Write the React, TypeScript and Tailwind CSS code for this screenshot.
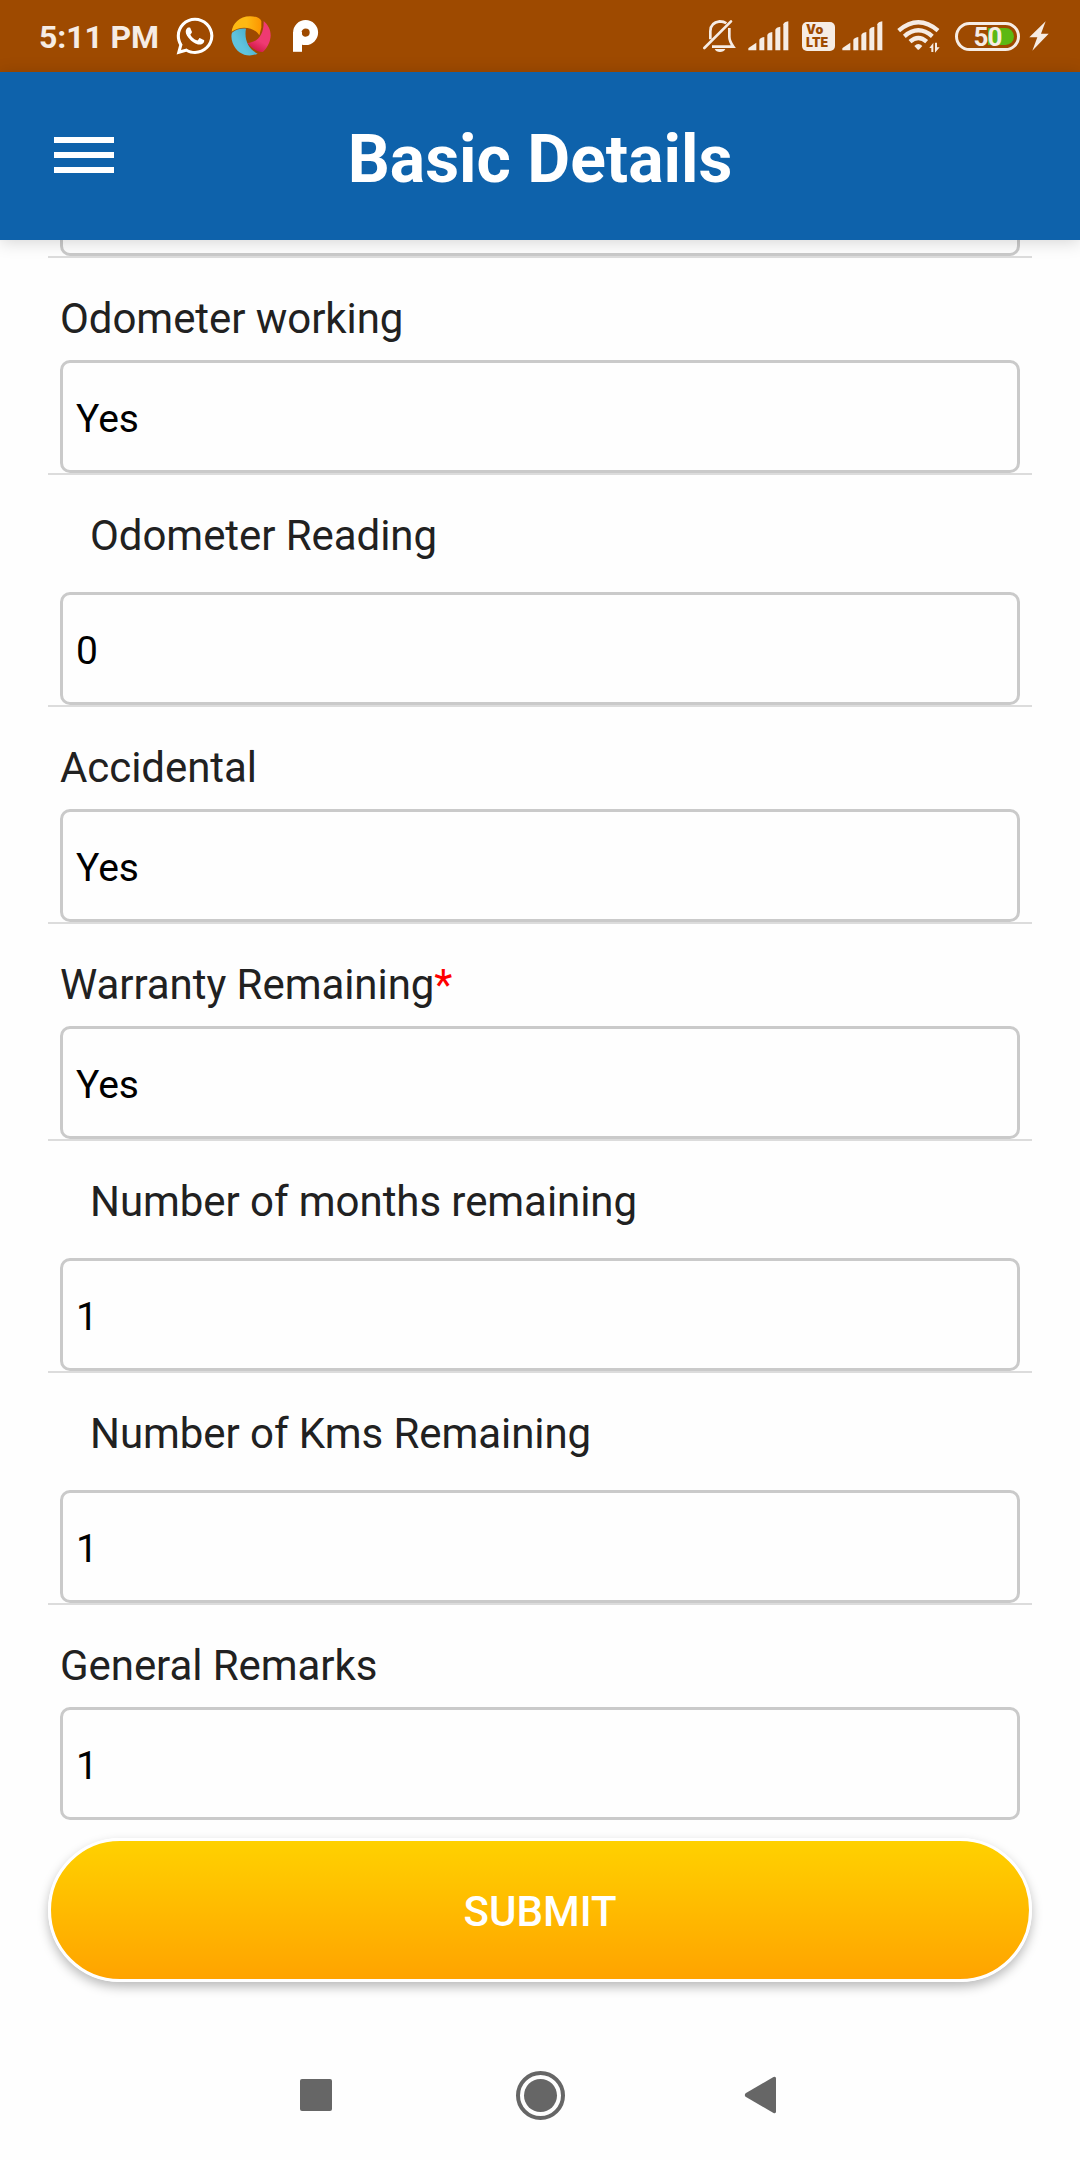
import React from "react";
import { FaWhatsapp } from "react-icons/fa";

type Field = { label: string; value: string; indented?: boolean; required?: boolean };

const FIELDS: Field[] = [
  { label: "Odometer working", value: "Yes" },
  { label: "Odometer Reading", value: "0", indented: true },
  { label: "Accidental", value: "Yes" },
  { label: "Warranty Remaining", value: "Yes", required: true },
  { label: "Number of months remaining", value: "1", indented: true },
  { label: "Number of Kms Remaining", value: "1", indented: true },
  { label: "General Remarks", value: "1" },
];

function ApertureLogo() {
  return (
    <svg className="ml-[15px] h-[40px] w-[40px] shrink-0" viewBox="17 17 120 120">
      <defs>
        <linearGradient id="petal-yellow" x1="0" x2="1" y1="0" y2="0">
          <stop offset="0.5" stopColor="#fdb913" />
          <stop offset="1" stopColor="#fd9500" />
        </linearGradient>
        <linearGradient id="petal-pink" x1="0.6" x2="0.4" y1="0.5" y2="1">
          <stop offset="0.3" stopColor="#ef3a72" />
          <stop offset="1" stopColor="#cf1745" />
        </linearGradient>
        <linearGradient id="petal-blue" x1="1" x2="0.3" y1="0" y2="0.5">
          <stop offset="0" stopColor="#3aa2c0" />
          <stop offset="1" stopColor="#60c3dc" />
        </linearGradient>
      </defs>
      <path d="M19 64C22 40 42 18 74 18C90 18 104 21 108 32V52L102 75C92 54 50 42 19 64Z" fill="url(#petal-yellow)" />
      <path d="M115 32C132 46 140 68 134 89C130 104 120 120 112 125C98 127 78 112 66 98C96 96 116 76 115 32Z" fill="url(#petal-pink)" />
      <path d="M62 55C56 86 68 116 97 130C66 144 34 130 22 98C18 86 17 76 20 67C32 57 46 54 62 55Z" fill="url(#petal-blue)" />
    </svg>
  );
}

function PLogo() {
  return (
    <svg className="ml-[22px] h-[34px] w-[26px] shrink-0" viewBox="0 0 26 34" fill="none" stroke="#fff">
      <circle cx="12.6" cy="13.6" r="8.3" strokeWidth="8.4" />
      <path d="M4.5 13V32.8" strokeWidth="9" />
    </svg>
  );
}

function BellOff() {
  return (
    <svg className="h-[34px] w-[34px] shrink-0" viewBox="60 57 102 102" fill="none" stroke="#f6ece4" strokeWidth="8">
      <path d="M85 118V94C85 76 96 66 113 64C121 64 128 66 133 70" />
      <path d="M142 84V110C142 122 147 130 154 140H90" />
      <path d="M67 144L147 64" strokeLinecap="round" />
      <path d="M98 147H130C126 159 102 159 98 147Z" fill="#f6ece4" stroke="none" />
    </svg>
  );
}

function Signal() {
  return (
    <svg className="h-[30px] w-[41px] shrink-0" viewBox="200 62 123 90" fill="#f6ece4">
      <path d="M201 150V144Q202 142 206 140L225 127V150Z" />
      <path d="M234 150V119Q235 113 249 110V150Z" />
      <path d="M258 150V104Q260 97 273 95V150Z" />
      <path d="M282 150V88Q284 81 297 79V150Z" />
      <path d="M306 150V72Q308 65 321 63V150Z" />
    </svg>
  );
}

function Wifi() {
  return (
    <svg className="ml-[14px] h-[34px] w-[44px] shrink-0" viewBox="650 60 132 102" fill="none" stroke="#f6ece4" strokeWidth="13">
      <path d="M655 95Q714 45 773 95" />
      <path d="M672 112Q714 76 756 112" />
      <path d="M689 128Q714 106 739 128" />
      <path d="M702 141Q714 129 726 141L717 151Q714 154 711 151Z" fill="#f6ece4" stroke="none" />
      <path d="M747 147L759 131V159H753V147ZM764 131H770V145H778L764 161Z" fill="#f6ece4" stroke="none" />
    </svg>
  );
}

function StatusBar() {
  return (
    <div className="flex h-[72px] shrink-0 items-center bg-[#9e4a00] pl-[39px] pr-[31px] text-[#f6ece4]">
      <span className="w-[120px] shrink-0 whitespace-nowrap pt-[3px] text-[32px] font-bold leading-[69px] tracking-[-0.1px]">5:11 PM</span>
      <FaWhatsapp className="ml-[15px] size-[42px] shrink-0 text-white" />
      <ApertureLogo />
      <PLogo />
      <div className="ml-auto flex items-center">
        <BellOff />
        <div className="ml-[12px] flex"><Signal /></div>
        <div className="ml-[13px] flex h-[29px] w-[33px] shrink-0 flex-col items-start rounded-[5px] bg-[#f6ece4] pl-1 font-[Inter] text-[12.5px] font-black leading-none text-[#9e4a00]">
          <span className="pt-[1px] leading-[14px] tracking-[0.5px]">Vo</span>
          <span className="leading-[12px]">LTE</span>
        </div>
        <div className="ml-[7px] flex"><Signal /></div>
        <Wifi />
        <div className="ml-[14px] grid h-[29px] w-[65px] shrink-0 place-items-center rounded-full border-[3px] border-[#f6ece4] p-[3px]">
          <div className="col-start-1 row-start-1 h-[17px] w-[26px] justify-self-end rounded-r-full bg-[#5cb813]" />
          <span className="z-10 col-start-1 row-start-1 w-[53px] pt-px text-center text-[26px] font-bold leading-[17px] tracking-[-1px]">50</span>
        </div>
        <svg className="ml-[9px] h-[30px] w-[20px] shrink-0" viewBox="1046 64 60 90" fill="#f6ece4">
          <path d="M1096 65L1047 113H1071L1056 153L1105 102H1082Z" />
        </svg>
      </div>
    </div>
  );
}

function FieldRow({ label, value, indented, required }: Field) {
  return (
    <>
      <div className={indented ? "h-[117px] pl-[42px] pt-5" : "h-[102px] pl-3 pt-5"}>
        <label className="block whitespace-nowrap text-[42px] leading-[82px] tracking-[-0.06px] text-[#212121]">
          {label}
          {required && <span className="text-[#ff0000]">*</span>}
        </label>
      </div>
      <div className="mx-3 h-[113px] rounded-[10px] border-[3px] border-[#cacaca] pl-[13px] pt-[3px] text-[39px] leading-[107px] text-black">
        {value}
      </div>
    </>
  );
}

export default function App() {
  return (
    <div className="flex h-[2160px] w-[1080px] flex-col overflow-hidden bg-[#fefefe] font-[Roboto,sans-serif]">
      <StatusBar />
      <header className="z-10 grid h-[168px] shrink-0 grid-cols-[1fr_auto_1fr] items-center bg-[#0e62ab] px-[54px] shadow-[0_2px_16px_rgba(0,0,0,0.17)]">
        <button className="mb-[3px] flex w-[60px] flex-col gap-[9px]" aria-label="Menu">
          <span className="h-[6px] bg-white" />
          <span className="h-[6px] bg-white" />
          <span className="h-[6px] bg-white" />
        </button>
        <h1 className="whitespace-nowrap pt-[8px] text-[66px] font-bold leading-[80px] text-white">Basic Details</h1>
      </header>
      <main className="px-12">
        <div className="mx-3 h-4 rounded-b-[10px] border-[3px] border-t-0 border-[#cacaca]" />
        <div className="h-[2px] bg-[#dcdcdc]" />
        {FIELDS.map((field, i) => (
          <React.Fragment key={field.label}>
            <FieldRow {...field} />
            {i < FIELDS.length - 1 && <div className="h-[2px] bg-[#dcdcdc]" />}
          </React.Fragment>
        ))}
        <button className="mt-[18px] block h-[144px] w-full rounded-full border-[3px] border-white bg-linear-to-b from-[#ffd200] to-[#ffa200] bg-origin-border pt-[4px] text-[42px] font-medium leading-[134px] text-white shadow-[0_5px_11px_rgba(0,0,0,0.27)]">
          SUBMIT
        </button>
      </main>
      <nav className="mt-auto flex h-[130px] shrink-0 items-center pl-[300px] text-[#666]">
        <div className="size-8 rounded-[2px] bg-[#666]" />
        <div className="ml-[184px] flex size-[49px] items-center justify-center rounded-full border-4 border-[#666]">
          <div className="size-[33px] rounded-full bg-[#666]" />
        </div>
        <svg className="ml-[179px] h-[38px] w-[33px]" viewBox="0 0 33 38" fill="#666">
          <path d="M1.6 17.2L29.5 1Q32 0 32 2.5V35.5Q32 38 29.5 37L1.6 20.8Q0 19 1.6 17.2Z" />
        </svg>
      </nav>
    </div>
  );
}
